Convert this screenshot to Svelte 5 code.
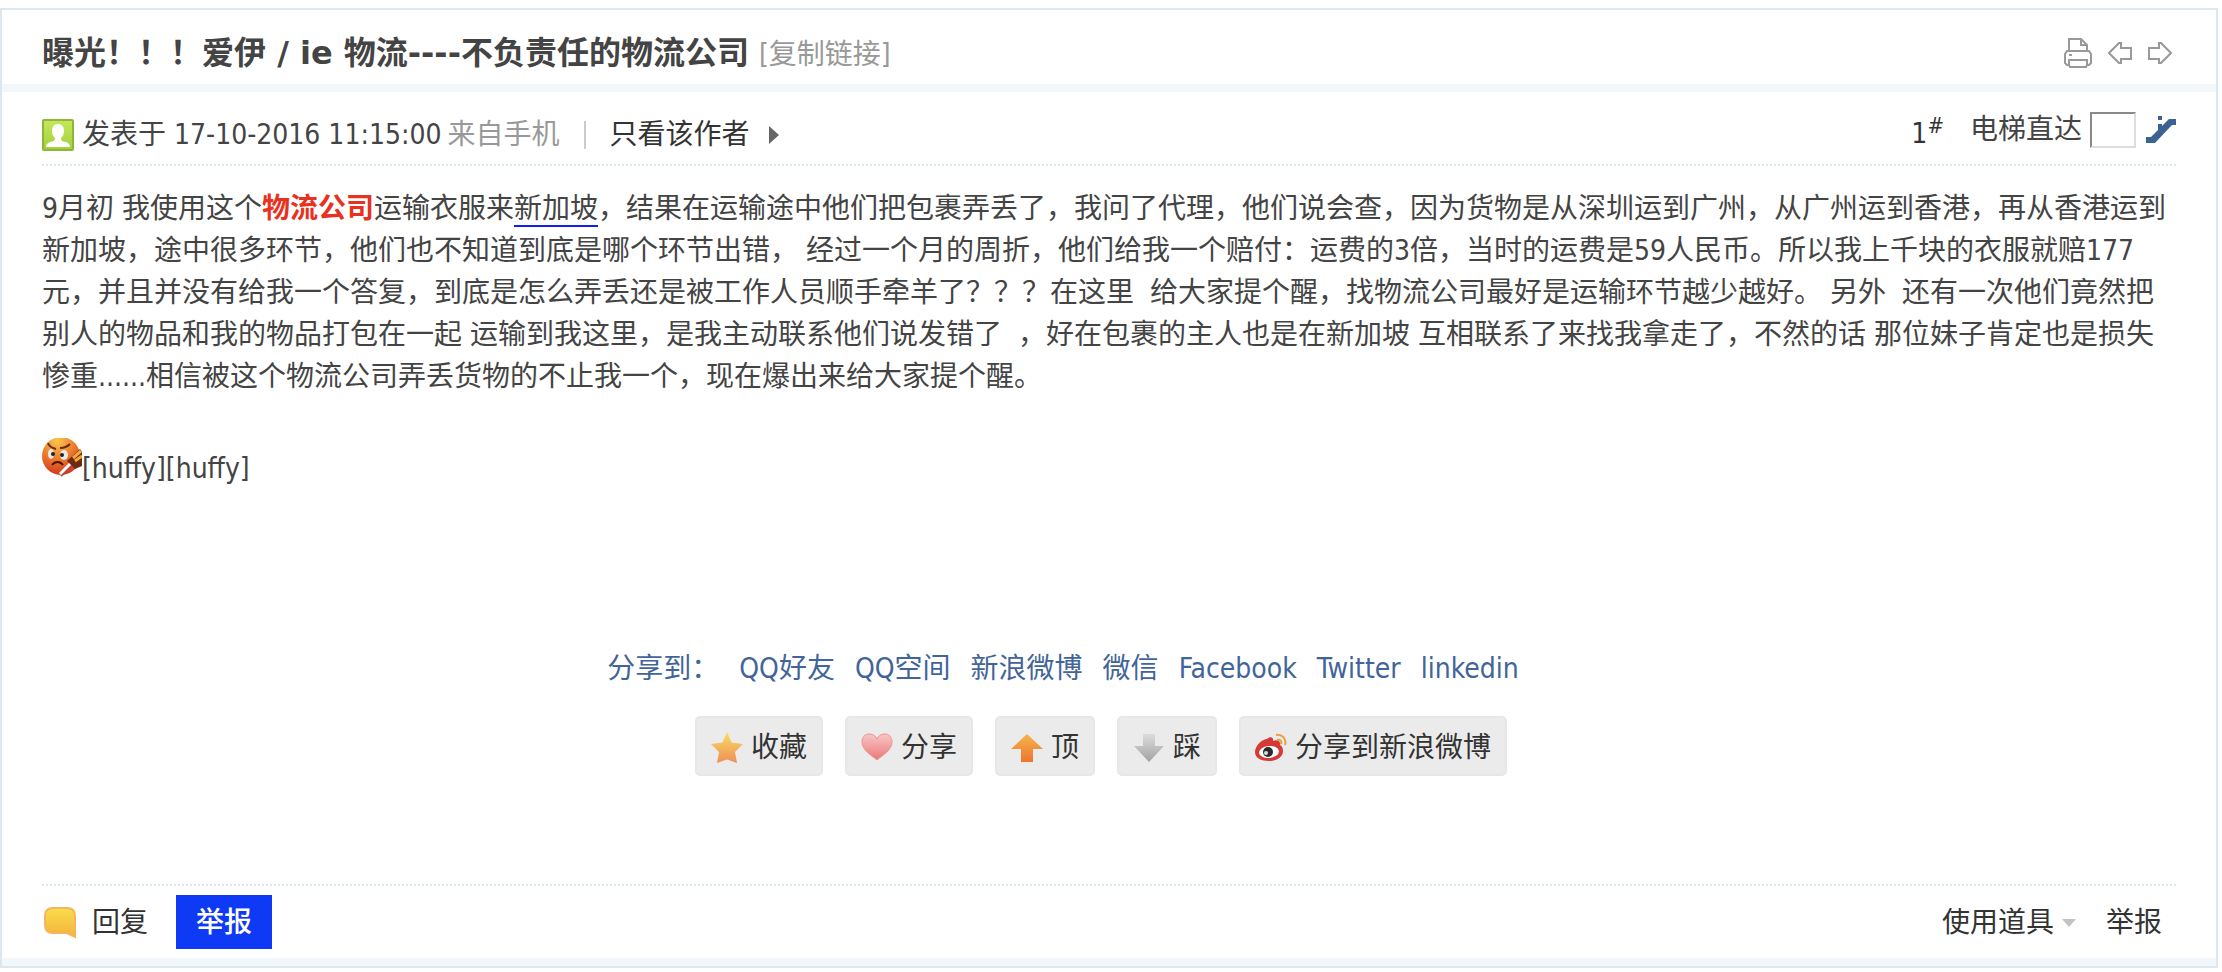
<script lang="ts">
  type Link = { label: string; href: string };

  const shareLinks: Link[] = [
    { label: "QQ好友", href: "#qq" },
    { label: "QQ空间", href: "#qzone" },
    { label: "新浪微博", href: "#weibo" },
    { label: "微信", href: "#wechat" },
    { label: "Facebook", href: "#facebook" },
    { label: "Twitter", href: "#twitter" },
    { label: "linkedin", href: "#linkedin" },
  ];

  const actions = [
    { label: "收藏", icon: "star" },
    { label: "分享", icon: "heart" },
    { label: "顶", icon: "up" },
    { label: "踩", icon: "down" },
    { label: "分享到新浪微博", icon: "weibo" },
  ];

  let floor = "";
</script>

<article class="post" lang="zh-CN">
  <header class="title-bar">
    <h1>曝光！！！爱伊 / ie 物流----不负责任的物流公司</h1>
    <a class="copy" href="#copy">[复制链接]</a>
    <nav class="tools">
      <a href="#print" aria-label="打印">
        <svg width="28" height="30" viewBox="0 0 28 30" fill="none" stroke="#999" stroke-width="2">
          <path d="M5 13V1h12l6 6v6M17 1v6h6" />
          <path d="M5 13H3l-2 3v9l2 2h2M23 13h2l2 3v9l-2 2h-2M5 13h18M5 17h3" />
          <path d="M5 22h18v5l-1 2H6l-1-2z" />
        </svg>
      </a>
      <a href="#prev" aria-label="上一主题">
        <svg width="24" height="24" viewBox="0 0 24 24" fill="none" stroke="#999" stroke-width="2">
          <path d="M1 12 11 2h2v5h10v11H13v4h-2z" />
        </svg>
      </a>
      <a href="#next" aria-label="下一主题">
        <svg width="24" height="24" viewBox="0 0 24 24" fill="none" stroke="#999" stroke-width="2">
          <path d="M23 12 13 2h-2v5H1v11h10v4h2z" />
        </svg>
      </a>
    </nav>
  </header>

  <div class="content">
    <div class="meta">
      <svg class="avatar" width="32" height="32" viewBox="0 0 32 32">
        <defs>
          <linearGradient id="green" x1="0" y1="0" x2="0" y2="1">
            <stop offset="0" stop-color="#c5e85a" />
            <stop offset="1" stop-color="#a3cf3c" />
          </linearGradient>
        </defs>
        <rect x="1" y="1" width="30" height="30" rx="1" fill="url(#green)" stroke="#8db63a" stroke-width="2" />
        <path
          d="M16 5c4 0 6 3 6 7 0 3-1 5-3 7 0 3 1 3 5 4 2 1 4 2 4 5H4c0-3 2-4 4-5 4-1 5-1 5-4-2-2-3-4-3-7 0-4 2-7 6-7z"
          fill="#fff"
        />
      </svg>
      <span class="date">发表于 17-10-2016 11:15:00</span>
      <span class="from">来自手机</span>
      <span class="pipe"></span>
      <a class="author" href="#author">只看该作者</a>
      <svg class="more" width="12" height="18" viewBox="0 0 12 18"><path d="M1 0 11 9 1 18z" fill="#666" /></svg>

      <div class="floor">
        <a class="number" href="#floor1">1<sup>#</sup></a>
        <label for="floor">电梯直达</label>
        <input id="floor" type="text" bind:value={floor} />
        <button class="lift" aria-label="跳转">
          <svg width="30" height="30" viewBox="0 0 30 30" fill="#3c6193">
            <path d="M0 22h5L23 4h7v6h-4L9 28H0zM12 9h4v8h-4zM12 1h4v4h-4z" />
          </svg>
        </button>
      </div>
    </div>

    <p class="body">
      9月初 我使用这个<a class="hot" href="#logistics">物流公司</a>运输衣服来<a class="place" href="#singapore">新加坡</a
      >，结果在运输途中他们把包裹弄丢了，我问了代理，他们说会查，因为货物是从深圳运到广州，从广州运到香港，再从香港运到新加坡，途中很多环节，他们也不知道到底是哪个环节出错， 经过一个月的周折，他们给我一个赔付：运费的3倍，当时的运费是59人民币。所以我上千块的衣服就赔177元，并且并没有给我一个答复，到底是怎么弄丢还是被工作人员顺手牵羊了？？？在这里&nbsp; 给大家提个醒，找物流公司最好是运输环节越少越好。 另外&nbsp; 还有一次他们竟然把别人的物品和我的物品打包在一起 运输到我这里，是我主动联系他们说发错了&nbsp; ，好在包裹的主人也是在新加坡 互相联系了来找我拿走了，不然的话 那位妹子肯定也是损失惨重......相信被这个物流公司弄丢货物的不止我一个，现在爆出来给大家提个醒。
    </p>

    <p class="mood">
      <svg width="40" height="40" viewBox="0 0 40 40">
        <defs>
          <radialGradient id="face" cx="0.4" cy="0.1" r="0.95">
            <stop offset="0" stop-color="#fbc64c" />
            <stop offset="0.5" stop-color="#ee7a2c" />
            <stop offset="1" stop-color="#c9321c" />
          </radialGradient>
        </defs>
        <circle cx="19" cy="18" r="19" fill="url(#face)" />
        <ellipse cx="9" cy="16" rx="3" ry="5" fill="#e8e8ea" />
        <ellipse cx="22" cy="17" rx="4" ry="5" fill="#e8e8ea" />
        <circle cx="11" cy="16" r="2" fill="#222" />
        <circle cx="20" cy="17" r="2" fill="#222" />
        <path d="M6 5c1 4 4 5 8 6M18 10c4 0 7-1 10-4" fill="none" stroke="#6b2a10" stroke-width="2" />
        <path d="M10 27c3-4 8-4 11 0" fill="none" stroke="#4c1208" stroke-width="2" />
        <path d="M25 23 38 11l2 3v14l-7 3z" fill="#6f2812" />
        <path d="m31 20 8-7M33 23l7-5" stroke="#f3a83b" stroke-width="3" />
        <path d="m18 37 11-10" stroke="#b6443a" stroke-width="5" />
        <path d="m18 36 10-10" stroke="#fff" stroke-width="3" />
      </svg><span>[huffy][huffy]</span>
    </p>

    <div class="share">
      <span>分享到：</span>
      {#each shareLinks as link}
        <a href={link.href}>{link.label}</a>
      {/each}
    </div>

    <div class="actions">
      {#each actions as action}
        <button>
          <svg width="32" height="32" viewBox="0 0 32 32">
            {#if action.icon === "star"}
              <defs>
                <linearGradient id="gold" x1="0" y1="0" x2="0" y2="1">
                  <stop offset="0" stop-color="#f9dc62" />
                  <stop offset="1" stop-color="#ee9058" />
                </linearGradient>
              </defs>
              <path
                d="M16 0 20.500 10.500 32 12 24 20 26 31 16 27.500 6 31 8 20 0 12 11.500 10.500z"
                fill="url(#gold)"
              />
            {:else if action.icon === "heart"}
              <defs>
                <linearGradient id="pink" x1="0" y1="0" x2="0" y2="1">
                  <stop offset="0" stop-color="#f8c6c6" />
                  <stop offset="1" stop-color="#ec7777" />
                </linearGradient>
              </defs>
              <path
                d="M16 28C10 23 1 18 1 10c0-5 3-8 7-8 4 0 7 2 8 5 1-3 4-5 8-5 4 0 7 3 7 8 0 8-9 13-15 18z"
                fill="url(#pink)"
                stroke="#ee9494"
              />
            {:else if action.icon === "up"}
              <defs>
                <linearGradient id="orange" x1="0" y1="0" x2="0" y2="1">
                  <stop offset="0" stop-color="#f4b54c" />
                  <stop offset="1" stop-color="#ee7530" />
                </linearGradient>
              </defs>
              <path d="M16 2 32 17H22v13H10V17H0z" fill="url(#orange)" />
            {:else if action.icon === "down"}
              <defs>
                <linearGradient id="silver" x1="0" y1="0" x2="0" y2="1">
                  <stop offset="0" stop-color="#dcdcdc" />
                  <stop offset="1" stop-color="#a2a2a2" />
                </linearGradient>
              </defs>
              <path d="M10 2h12v12h9L16 30 1 14h9z" fill="url(#silver)" />
            {:else}
              <path
                d="M12 7c3-3 7-2 6 2 4-2 8 0 7 4 2 1 3 3 3 6 0 6-6 10-14 10S0 26 0 20C0 14 7 7 12 7z"
                fill="#d63a36"
              />
              <ellipse cx="14" cy="20" rx="10" ry="6" fill="#fff" transform="rotate(-6 14 20)" />
              <circle cx="13" cy="20" r="5" fill="#2a2a2a" />
              <circle cx="11" cy="21" r="2" fill="#ddd" />
              <path d="M21 3c6-1 11 4 9 10M22 8c3-1 5 1 4 4" fill="none" stroke="#e7a03c" stroke-width="2" />
            {/if}
          </svg>
          {action.label}
        </button>
      {/each}
    </div>

    <footer>
      <a class="reply" href="#reply">
        <svg width="34" height="32" viewBox="0 0 34 32">
          <defs>
            <linearGradient id="bubble" x1="0" y1="0" x2="0" y2="1">
              <stop offset="0" stop-color="#fbdd4c" />
              <stop offset="1" stop-color="#f3b23d" />
            </linearGradient>
          </defs>
          <path
            d="M11 1h14c5 0 8 3 8 8v21l-8-4H11c-5 0-8-3-8-8V9c0-5 3-8 8-8z"
            fill="url(#bubble)"
            stroke="#f5b55c"
            stroke-width="2"
          />
        </svg>
        回复
      </a>
      <button class="report">举报</button>
      <a class="magic" href="#magic">
        使用道具
        <svg width="14" height="8" viewBox="0 0 14 8"><path d="M0 0h14L7 8z" fill="#c3c3c3" /></svg>
      </a>
      <a href="#report">举报</a>
    </footer>
  </div>
</article>

<style>
  :global(body) {
    background: #fff;
  }

  .post {
    margin: 8px 4px 4px 0;
    border: 2px solid #dce8f0;
    color: #444;
    font-family: "DejaVu Sans Condensed", "Noto Sans", "Noto Sans CJK SC", sans-serif;
    font-size: 28px;
    line-height: 42px;
  }

  a {
    color: #333;
    text-decoration: none;
  }

  svg {
    display: block;
    flex: none;
  }

  button,
  input {
    box-sizing: border-box;
    color: inherit;
    font: inherit;
  }

  .title-bar {
    display: flex;
    align-items: center;
    height: 62px;
    padding: 12px 44px 0 40px;
    border-bottom: 8px solid #f1f7fa;
  }

  h1 {
    margin: 0;
    font-family: "DejaVu Sans", "Noto Sans CJK SC", sans-serif;
    font-size: 32px;
    font-weight: 700;
  }

  .copy {
    margin-left: 10px;
    padding-top: 4px;
    color: #999;
  }

  .tools {
    display: flex;
    align-items: center;
    gap: 16px;
    margin-left: auto;
  }

  .content {
    padding: 0 40px;
    border-bottom: 8px solid #f1f7fa;
  }

  .meta {
    display: flex;
    align-items: center;
    height: 58px;
    padding-top: 14px;
    border-bottom: 2px dotted #dce8f0;
  }

  .avatar {
    margin-right: 8px;
  }

  .from {
    margin-left: 6px;
    color: #999;
  }

  .pipe {
    width: 2px;
    height: 28px;
    margin: 0 24px;
    background: #ccc;
  }

  .more {
    margin-left: 18px;
  }

  .floor {
    display: flex;
    align-items: center;
    margin-left: auto;
    padding-bottom: 10px;
  }

  .number {
    margin-right: 26px;
    padding-top: 8px;
  }

  sup {
    font-size: 22px;
    line-height: 0;
  }

  .floor input {
    width: 46px;
    height: 36px;
    margin: 0 10px 0 8px;
    border: 2px inset #ddd;
    background: #fff;
  }

  .lift {
    padding: 0;
    border: 0;
    background: none;
  }

  .body {
    margin: 22px 0 0;
  }

  .hot {
    color: #e8321f;
    font-weight: 700;
  }

  .place {
    border-bottom: 2px solid #0f1ef5;
    color: #444;
  }

  .mood {
    display: flex;
    align-items: flex-start;
    margin: 40px 0 0;
  }

  .mood span {
    margin-top: 10px;
  }

  .share {
    display: flex;
    justify-content: center;
    gap: 20px;
    margin-top: 158px;
    padding-right: 92px;
    color: #426599;
  }

  .share a {
    color: #426599;
  }

  .actions {
    display: flex;
    justify-content: center;
    gap: 22px;
    margin-top: 26px;
    padding-right: 16px;
  }

  .actions button {
    display: flex;
    align-items: center;
    gap: 8px;
    height: 60px;
    padding: 4px 14px 0;
    border: 2px solid #e7e7e7;
    border-radius: 5px;
    background: #ebebeb;
    color: #333;
    white-space: nowrap;
  }

  footer {
    display: flex;
    align-items: center;
    height: 72px;
    margin-top: 108px;
    border-top: 2px dotted #dce8f0;
  }

  footer a {
    padding-top: 2px;
  }

  .reply {
    display: flex;
    align-items: center;
    gap: 16px;
  }

  .report {
    height: 54px;
    margin-left: 28px;
    padding: 2px 20px 0;
    border: 0;
    background: #0f3af5;
    color: #fff;
    font-weight: 500;
  }

  .magic {
    display: flex;
    align-items: center;
    gap: 8px;
    margin-right: 30px;
    margin-left: auto;
  }

  footer > a:last-child {
    margin-right: 14px;
  }
</style>
